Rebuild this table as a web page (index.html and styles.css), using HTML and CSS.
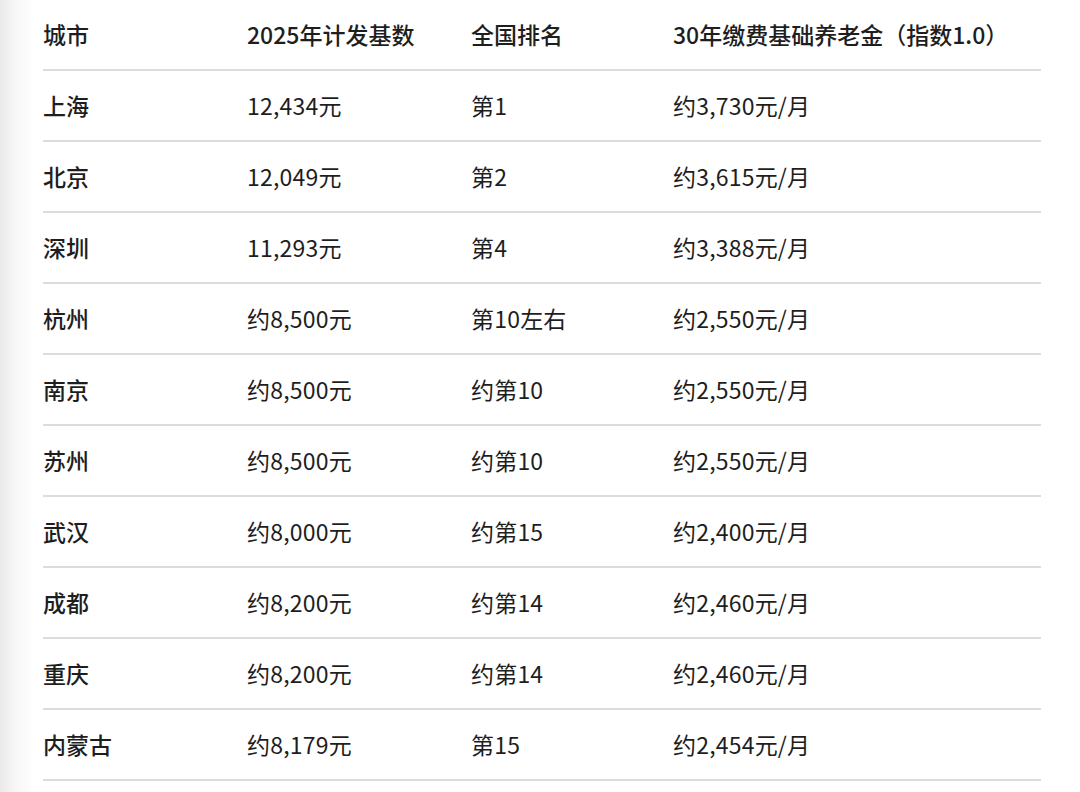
FILE: index.html
```html
<!DOCTYPE html>
<html lang="zh-CN">
<head>
<meta charset="utf-8">
<link rel="stylesheet" href="styles.css">
</head>
<body>
<div class="page">
<table class="tbl">
  <thead>
    <tr><th class="c1">城市</th><th class="c2">2025年计发基数</th><th class="c3">全国排名</th><th class="c4">30年缴费基础养老金（指数1.0）</th></tr>
  </thead>
  <tbody>
    <tr><td class="city">上海</td><td>12,434元</td><td>第1</td><td>约3,730元/月</td></tr>
    <tr><td class="city">北京</td><td>12,049元</td><td>第2</td><td>约3,615元/月</td></tr>
    <tr><td class="city">深圳</td><td>11,293元</td><td>第4</td><td>约3,388元/月</td></tr>
    <tr><td class="city">杭州</td><td>约8,500元</td><td>第10左右</td><td>约2,550元/月</td></tr>
    <tr><td class="city">南京</td><td>约8,500元</td><td>约第10</td><td>约2,550元/月</td></tr>
    <tr><td class="city">苏州</td><td>约8,500元</td><td>约第10</td><td>约2,550元/月</td></tr>
    <tr><td class="city">武汉</td><td>约8,000元</td><td>约第15</td><td>约2,400元/月</td></tr>
    <tr><td class="city">成都</td><td>约8,200元</td><td>约第14</td><td>约2,460元/月</td></tr>
    <tr><td class="city">重庆</td><td>约8,200元</td><td>约第14</td><td>约2,460元/月</td></tr>
    <tr><td class="city">内蒙古</td><td>约8,179元</td><td>第15</td><td>约2,454元/月</td></tr>
  </tbody>
</table>
</div>
</body>
</html>
```

FILE: styles.css
```css
html, body {
  margin: 0;
  padding: 0;
}
body {
  width: 1080px;
  height: 792px;
  overflow: hidden;
  background: linear-gradient(to right, #e9e9e9 0px, #f6f6f6 14px, #ffffff 34px);
  font-family: "Noto Sans CJK SC", "Noto Sans", sans-serif;
  color: #1e1e1e;
}
.page {
  padding: 0 39px 0 43px;
}
.tbl {
  width: 998px;
  border-collapse: collapse;
  table-layout: fixed;
}
.tbl th, .tbl td {
  height: 69px;
  padding: 0;
  text-align: left;
  vertical-align: middle;
  font-size: 23px;
  line-height: 1;
  border-bottom: 2px solid #dcdcdc;
  white-space: nowrap;
}
.tbl th {
  font-weight: 500;
}
.tbl td {
  font-weight: 400;
  letter-spacing: 0.2px;
}
.tbl td.city {
  font-weight: 500;
  letter-spacing: 0;
}
.c1 { width: 204px; }
.c2 { width: 224px; }
.c3 { width: 202px; }
.c4 { width: auto; }
```
